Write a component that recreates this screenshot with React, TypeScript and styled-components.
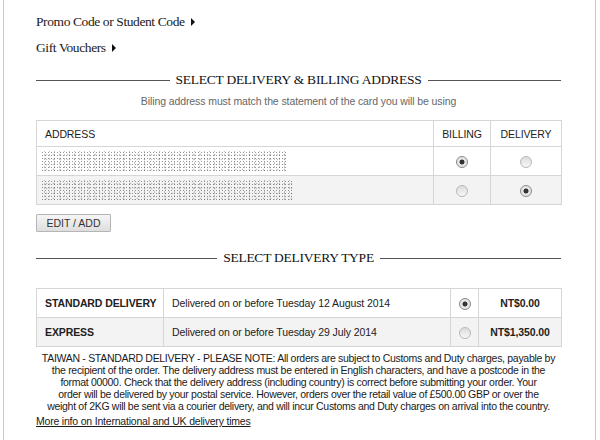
import React, { useState } from 'react'
import styled, { createGlobalStyle } from 'styled-components'

const GlobalStyle = createGlobalStyle`
  body {
    margin: 0;
    background: #fff;
    font-family: "Liberation Sans", Arial, sans-serif;
    color: #222;
  }
`

const Panel = styled.div`
  margin-left: 3px;
  width: 593px;
  height: 440px;
  border-left: 1px solid #c8c8c8;
  border-right: 1px solid #c8c8c8;
  padding: 9px 0 0 32px;
  box-sizing: border-box;
  overflow: hidden;
`

const Content = styled.div`
  width: 525px;
`

const TextLink = styled.div`
  height: 26px;
  line-height: 26px;
  font-family: "Liberation Serif", "DejaVu Serif", serif;
  font-size: 13.5px;
  letter-spacing: -0.4px;
  color: #1a1a1a;
  display: flex;
  align-items: center;
  gap: 6px;
  cursor: pointer;
`

const Arrow = styled.span`
  width: 0;
  height: 0;
  border-top: 4px solid transparent;
  border-bottom: 4px solid transparent;
  border-left: 4px solid #111;
`

const Heading = styled.div<{ $top: number }>`
  margin-top: ${p => p.$top}px;
  height: 20px;
  display: flex;
  align-items: center;
  gap: 6px;
  font-family: "Liberation Serif", "DejaVu Serif", serif;
  font-size: 13.5px;
  letter-spacing: -0.25px;
  color: #111;
  white-space: nowrap;
  &::before,
  &::after {
    content: "";
    flex: 1;
    height: 1px;
    background: #555;
  }
`

const Sub = styled.div`
  margin-top: 4px;
  line-height: 14px;
  text-align: center;
  font-size: 10.5px;
  letter-spacing: -0.1px;
  color: #666;
`

const Table = styled.table<{ $top: number }>`
  margin-top: ${p => p.$top}px;
  width: 525px;
  border-collapse: collapse;
  table-layout: fixed;
  font-size: 10.5px;
  letter-spacing: -0.1px;
  color: #222;
`

const Row = styled.tr<{ $alt?: boolean; $h: number }>`
  height: ${p => p.$h}px;
  background: ${p => (p.$alt ? '#f3f3f3' : '#fff')};
`

const Cell = styled.td<{ $align?: string; $bold?: boolean }>`
  border: 1px solid #d6d6d6;
  padding: 0 0 0 8px;
  text-align: ${p => p.$align || 'left'};
  font-weight: ${p => (p.$bold ? 'bold' : 'normal')};
  vertical-align: middle;
  white-space: nowrap;
  ${p => (p.$align === 'center' ? 'padding: 0;' : '')}
`

const Noise = styled.div<{ $w: number }>`
  width: ${p => p.$w}px;
  height: 20px;
  margin-left: -4px;
  background-image:
    radial-gradient(circle, rgba(60, 60, 60, 0.55) 0.6px, transparent 1px),
    radial-gradient(circle, rgba(120, 120, 120, 0.45) 0.6px, transparent 1px),
    radial-gradient(circle, rgba(90, 90, 90, 0.35) 0.7px, transparent 1.1px);
  background-size: 3px 3px, 5px 4px, 7px 5px;
  background-position: 0 0, 1px 2px, 2px 1px;
`

const Radio = styled.span<{ $on?: boolean }>`
  display: inline-block;
  width: 10px;
  height: 10px;
  border-radius: 50%;
  border: 1px solid ${p => (p.$on ? '#8a8a8a' : '#b8b8b8')};
  background: ${p =>
    p.$on
      ? 'radial-gradient(circle, #333 0 2.2px, #e6e6e6 2.8px)'
      : 'linear-gradient(#dcdcdc, #f7f7f7)'};
  vertical-align: middle;
  cursor: pointer;
`

const EditButton = styled.button`
  margin-top: 9px;
  height: 18px;
  width: 75px;
  padding: 0;
  font-family: "Liberation Sans", Arial, sans-serif;
  font-size: 10.5px;
  color: #333;
  border: 1px solid #b5b5b5;
  border-radius: 1px;
  background: linear-gradient(#f6f6f6, #dedede);
  display: block;
`

const Note = styled.p`
  margin: 5px 0 0;
  font-size: 10.5px;
  letter-spacing: -0.3px;
  line-height: 12px;
  text-align: center;
  white-space: nowrap;
  color: #1a1a1a;
`

const MoreLink = styled.a`
  display: block;
  margin-top: 2px;
  font-size: 10.5px;
  letter-spacing: -0.2px;
  line-height: 14px;
  color: #1a1a1a;
  text-decoration: underline;
`

const addresses = [{ w: 247 }, { w: 252 }]

const App: React.FC = () => {
  const [billing, setBilling] = useState(0)
  const [delivery, setDelivery] = useState(1)
  const [type, setType] = useState(0)

  return (
    <>
      <GlobalStyle />
      <Panel>
        <Content>
          <TextLink>Promo Code or Student Code <Arrow /></TextLink>
          <TextLink>Gift Vouchers <Arrow /></TextLink>

          <Heading $top={9}>SELECT DELIVERY &amp; BILLING ADDRESS</Heading>
          <Sub>Biling address must match the statement of the card you will be using</Sub>

          <Table $top={12}>
            <colgroup>
              <col style={{ width: 397 }} />
              <col style={{ width: 57 }} />
              <col style={{ width: 71 }} />
            </colgroup>
            <tbody>
              <Row $h={26}>
                <Cell>ADDRESS</Cell>
                <Cell $align="center">BILLING</Cell>
                <Cell $align="center">DELIVERY</Cell>
              </Row>
              {addresses.map((a, i) => (
                <Row key={i} $h={29} $alt={i % 2 === 1}>
                  <Cell><Noise $w={a.w} /></Cell>
                  <Cell $align="center">
                    <Radio $on={billing === i} onClick={() => setBilling(i)} />
                  </Cell>
                  <Cell $align="center">
                    <Radio $on={delivery === i} onClick={() => setDelivery(i)} />
                  </Cell>
                </Row>
              ))}
            </tbody>
          </Table>

          <EditButton>EDIT / ADD</EditButton>

          <Heading $top={16}>SELECT DELIVERY TYPE</Heading>

          <Table $top={20}>
            <colgroup>
              <col style={{ width: 127 }} />
              <col style={{ width: 287 }} />
              <col style={{ width: 28 }} />
              <col style={{ width: 83 }} />
            </colgroup>
            <tbody>
              <Row $h={29}>
                <Cell $bold>STANDARD DELIVERY</Cell>
                <Cell>Delivered on or before Tuesday 12 August 2014</Cell>
                <Cell $align="center"><Radio $on={type === 0} onClick={() => setType(0)} /></Cell>
                <Cell $align="center" $bold>NT$0.00</Cell>
              </Row>
              <Row $h={29} $alt>
                <Cell $bold>EXPRESS</Cell>
                <Cell>Delivered on or before Tuesday 29 July 2014</Cell>
                <Cell $align="center"><Radio $on={type === 1} onClick={() => setType(1)} /></Cell>
                <Cell $align="center" $bold>NT$1,350.00</Cell>
              </Row>
            </tbody>
          </Table>

          <Note>
            TAIWAN - STANDARD DELIVERY - PLEASE NOTE: All orders are subject to Customs and Duty charges, payable by<br />
            the recipient of the order. The delivery address must be entered in English characters, and have a postcode in the<br />
            format 00000. Check that the delivery address (including country) is correct before submitting your order. Your<br />
            order will be delivered by your postal service. However, orders over the retail value of £500.00 GBP or over the<br />
            weight of 2KG will be sent via a courier delivery, and will incur Customs and Duty charges on arrival into the country.
          </Note>
          <MoreLink href="#">More info on International and UK delivery times</MoreLink>
        </Content>
      </Panel>
    </>
  )
}

export default App
